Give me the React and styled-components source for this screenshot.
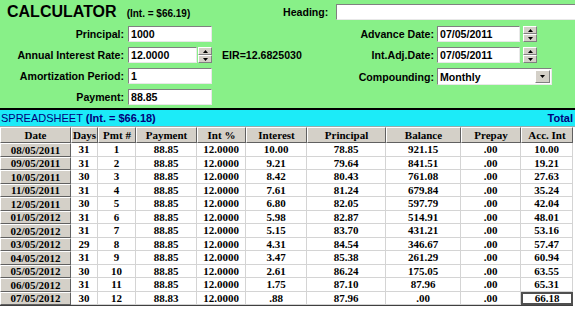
import React from 'react';
import styled, { createGlobalStyle } from 'styled-components';

const Global = createGlobalStyle`
  html, body { margin: 0; padding: 0; background: #ffffff; }
  body { font-family: "Liberation Sans", Arial, sans-serif; }
`;

const Page = styled.div`
  width: 575px;
  height: 310px;
  overflow: hidden;
  background: #ffffff;
`;

const TopPanel = styled.div`
  height: 108px;
  background: #88f088;
  border-bottom: 2px solid #000;
  display: flex;
`;

const LeftCol = styled.div`
  width: 280px;
  display: flex;
  flex-direction: column;
`;

const RightCol = styled.div`
  flex: 1;
  display: flex;
  flex-direction: column;
  padding-top: 4px;
`;

const TitleRow = styled.div`
  height: 26px;
  box-sizing: border-box;
  padding: 3px 0 0 7px;
  display: flex;
  align-items: baseline;
`;

const Title = styled.span`
  font-size: 16px;
  line-height: 18px;
  font-weight: bold;
  color: #000;
`;

const TitleNote = styled.span`
  font-size: 10px;
  font-weight: bold;
  margin-left: 10px;
  color: #000;
`;

const Rows = styled.div`
  display: flex;
  flex-direction: column;
  gap: 5px;
`;

const FieldRow = styled.div`
  display: grid;
  grid-template-columns: ${p => p.$label}px auto auto;
  column-gap: ${p => p.$gap || 4}px;
  height: 16px;
  align-items: center;
`;

const Label = styled.span`
  text-align: right;
  font-size: 10.6px;
  font-weight: bold;
  color: #000;
  white-space: nowrap;
`;

const Control = styled.div`
  display: flex;
  align-items: center;
`;

const TextBox = styled.input`
  width: ${p => p.$w}px;
  height: 16px;
  box-sizing: border-box;
  margin: 0;
  padding: 0 2px;
  background: #fff;
  border: 1px solid;
  border-color: #808080 #e8e8e8 #e8e8e8 #808080;
  font-family: "Liberation Sans", Arial, sans-serif;
  font-size: 10.6px;
  font-weight: bold;
  color: #000;
  outline: none;
`;

const Spinner = styled.div`
  width: 14px;
  height: 16px;
  margin-left: ${p => p.$gap || 0}px;
  display: flex;
  flex-direction: column;
`;

const SpinButton = styled.div`
  flex: 1;
  background: #d4d0c8;
  border: 1px solid;
  border-color: #ffffff #808080 #808080 #ffffff;
  box-sizing: border-box;
  display: flex;
  align-items: center;
  justify-content: center;
`;

const Arrow = ({ up }) => (
  <svg width="5" height="3" viewBox="0 0 5 3">
    <path d={up ? 'M2.5 0 L5 3 L0 3 Z' : 'M0 0 L5 0 L2.5 3 Z'} fill="#000" />
  </svg>
);

const SpinBox = ({ gap }) => (
  <Spinner $gap={gap}>
    <SpinButton><Arrow up /></SpinButton>
    <SpinButton><Arrow /></SpinButton>
  </Spinner>
);

const Info = styled.span`
  margin-left: 10px;
  font-size: 10.6px;
  font-weight: bold;
  color: #000;
  white-space: nowrap;
`;

const HeadingRow = styled.div`
  height: 16px;
  display: flex;
  align-items: center;
  gap: 8px;
  padding-left: 3px;
  margin-bottom: 6px;
`;

const Select = styled.div`
  width: 115px;
  height: 17px;
  box-sizing: border-box;
  background: #fff;
  border: 1px solid;
  border-color: #808080 #e8e8e8 #e8e8e8 #808080;
  display: flex;
  align-items: center;
  justify-content: space-between;
  padding-left: 2px;
  font-size: 10.6px;
  font-weight: bold;
`;

const SelectButton = styled.div`
  width: 15px;
  height: 13px;
  margin-right: 1px;
  background: #d4d0c8;
  border: 1px solid;
  border-color: #ffffff #808080 #808080 #ffffff;
  box-sizing: border-box;
  display: flex;
  align-items: center;
  justify-content: center;
`;

const SheetBar = styled.div`
  height: 16px;
  background: #1cebf8;
  display: flex;
  align-items: center;
  justify-content: space-between;
  padding: 0 2px 0 1px;
  color: #00007a;
  font-size: 11px;
  border-bottom: 1px solid #9aa;
`;

const Bold = styled.span`
  font-weight: bold;
`;

const Grid = styled.div`
  display: grid;
  width: 573px;
  grid-template-columns: 71px 27px 38px 61px 49px 61px 79px 75px 60px 52px;
  grid-template-rows: 16px repeat(12, 13.5px);
  border-bottom: 1px solid #404040;
  font-family: "Liberation Serif", "Times New Roman", serif;
  font-size: 11px;
  font-weight: bold;
  color: #000;
`;

const Cell = styled.div`
  box-sizing: border-box;
  display: flex;
  align-items: center;
  justify-content: center;
  white-space: nowrap;
  background: #fff;
  border-right: 1px solid #d4d4d4;
  border-bottom: 1px solid #d4d4d4;
  ${p => p.$head && `
    background: #d4d0c8;
    border-top: 1px solid #ffffff;
    border-left: 1px solid #ffffff;
    border-right: 1px solid #606060;
    border-bottom: 1px solid #606060;
  `}
  ${p => p.$selected && `
    border: 2px solid #505050;
  `}
`;

const headers = ['Date', 'Days', 'Pmt #', 'Payment', 'Int %', 'Interest', 'Principal', 'Balance', 'Prepay', 'Acc. Int'];

const rows = [
  ['08/05/2011', '31', '1', '88.85', '12.0000', '10.00', '78.85', '921.15', '.00', '10.00'],
  ['09/05/2011', '31', '2', '88.85', '12.0000', '9.21', '79.64', '841.51', '.00', '19.21'],
  ['10/05/2011', '30', '3', '88.85', '12.0000', '8.42', '80.43', '761.08', '.00', '27.63'],
  ['11/05/2011', '31', '4', '88.85', '12.0000', '7.61', '81.24', '679.84', '.00', '35.24'],
  ['12/05/2011', '30', '5', '88.85', '12.0000', '6.80', '82.05', '597.79', '.00', '42.04'],
  ['01/05/2012', '31', '6', '88.85', '12.0000', '5.98', '82.87', '514.91', '.00', '48.01'],
  ['02/05/2012', '31', '7', '88.85', '12.0000', '5.15', '83.70', '431.21', '.00', '53.16'],
  ['03/05/2012', '29', '8', '88.85', '12.0000', '4.31', '84.54', '346.67', '.00', '57.47'],
  ['04/05/2012', '31', '9', '88.85', '12.0000', '3.47', '85.38', '261.29', '.00', '60.94'],
  ['05/05/2012', '30', '10', '88.85', '12.0000', '2.61', '86.24', '175.05', '.00', '63.55'],
  ['06/05/2012', '31', '11', '88.85', '12.0000', '1.75', '87.10', '87.96', '.00', '65.31'],
  ['07/05/2012', '30', '12', '88.83', '12.0000', '.88', '87.96', '.00', '.00', '66.18'],
];

export default function App() {
  return (
    <Page>
      <Global />
      <TopPanel>
        <LeftCol>
          <TitleRow>
            <Title>CALCULATOR</Title>
            <TitleNote>(Int. = $66.19)</TitleNote>
          </TitleRow>
          <Rows>
            <FieldRow $label={124}>
              <Label>Principal:</Label>
              <Control><TextBox $w={84} readOnly value="1000" /></Control>
            </FieldRow>
            <FieldRow $label={124}>
              <Label>Annual Interest Rate:</Label>
              <Control>
                <TextBox $w={69} readOnly value="12.0000" />
                <SpinBox gap={1} />
                <Info>EIR=12.6825030</Info>
              </Control>
            </FieldRow>
            <FieldRow $label={124}>
              <Label>Amortization Period:</Label>
              <Control><TextBox $w={84} readOnly value="1" /></Control>
            </FieldRow>
            <FieldRow $label={124}>
              <Label>Payment:</Label>
              <Control><TextBox $w={84} readOnly value="88.85" /></Control>
            </FieldRow>
          </Rows>
        </LeftCol>
        <RightCol>
          <HeadingRow>
            <Label>Heading:</Label>
            <TextBox $w={242} readOnly value="" />
          </HeadingRow>
          <Rows>
            <FieldRow $label={154} $gap={3}>
              <Label>Advance Date:</Label>
              <Control>
                <TextBox $w={83} readOnly value="07/05/2011" />
                <SpinBox gap={3} />
              </Control>
            </FieldRow>
            <FieldRow $label={154} $gap={3}>
              <Label>Int.Adj.Date:</Label>
              <Control>
                <TextBox $w={83} readOnly value="07/05/2011" />
                <SpinBox gap={3} />
              </Control>
            </FieldRow>
            <FieldRow $label={154} $gap={3}>
              <Label>Compounding:</Label>
              <Control>
                <Select>
                  <span>Monthly</span>
                  <SelectButton><Arrow /></SelectButton>
                </Select>
              </Control>
            </FieldRow>
          </Rows>
        </RightCol>
      </TopPanel>
      <SheetBar>
        <span>SPREADSHEET <Bold>(Int. = $66.18)</Bold></span>
        <Bold>Total</Bold>
      </SheetBar>
      <Grid>
        {headers.map(h => <Cell key={h} $head>{h}</Cell>)}
        {rows.map((r, ri) => r.map((v, ci) => (
          <Cell
            key={ri + '-' + ci}
            $head={ci === 0}
            $selected={ri === rows.length - 1 && ci === r.length - 1}
          >
            {v}
          </Cell>
        )))}
      </Grid>
    </Page>
  );
}
